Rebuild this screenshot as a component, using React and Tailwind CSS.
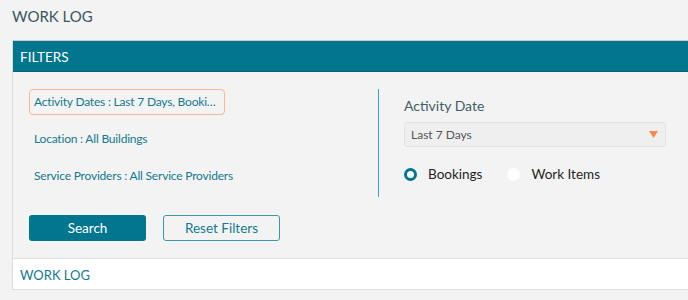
import { useState } from "react";

const App = () => {
    const [dateType, setDateType] = useState("bookings");

    const filters = [
        { id: "dates", label: "Activity Dates : Last 7 Days, Booki…", active: true },
        { id: "location", label: "Location : All Buildings" },
        { id: "providers", label: "Service Providers : All Service Providers" },
    ];

    return (
        <div className="h-[300px] overflow-hidden bg-[#f3f3f3] pl-3 font-['Lato',sans-serif]">
            <h1 className="pt-[6px] h-[40px] text-[15px] leading-[20px] text-[#3a5661]">WORK LOG</h1>

            <div className="border-l border-[#dcdcdc]">
                {/* Filters header */}
                <div className="h-[32px] border-t border-[#c4ccce] border-b border-b-[#0a5f70] bg-[#02768e] pl-[7px] pt-[3px] flex items-center">
                    <span className="text-white text-[13.5px] leading-none">FILTERS</span>
                </div>

                {/* Filter body */}
                <div className="pt-[17px] pl-4 pb-[17px] pr-[22px]">
                    <div className="flex h-[108px]">
                        <div className="w-[349px] flex flex-col items-start">
                            {filters.map((f, i) => (
                                <button
                                    key={f.id}
                                    type="button"
                                    className={`h-[26px] px-[4px] flex items-center justify-start whitespace-nowrap text-left rounded-[4px] border text-[12px] tracking-[-0.2px] text-[#127a8e] ${f.active ? "border-[#f5b996] w-[196px]" : "border-transparent"} ${i > 0 ? "mt-[11px]" : ""}`}
                                >
                                    {f.label}
                                </button>
                            ))}
                        </div>
                        <div className="w-px bg-[#3aa3b6]" />
                        <div className="flex-1 pl-[25px] pt-[7px]">
                            <div className="text-[14px] leading-[20px] text-[#3f5e67]">Activity Date</div>
                            <div className="mt-[6px] h-[25px] flex items-center justify-between rounded-[3px] border border-[#e3e3e3] bg-[#efefef] pl-[6px] pr-[7px]">
                                <span className="text-[12px] text-[#555]">Last 7 Days</span>
                                <svg width="9" height="7" viewBox="0 0 9 7">
                                    <path d="M0 0 H9 L4.5 7 Z" fill="#f58a4b" />
                                </svg>
                            </div>
                            <div className="mt-[17px] flex items-center h-[20px]">
                                {[
                                    { id: "bookings", label: "Bookings" },
                                    { id: "work", label: "Work Items" },
                                ].map((r, i) => (
                                    <label
                                        key={r.id}
                                        onClick={() => setDateType(r.id)}
                                        className={`flex items-center gap-[11px] cursor-pointer ${i > 0 ? "ml-[25px]" : ""}`}
                                    >
                                        <span
                                            className={`w-[13px] h-[13px] rounded-full bg-white ${dateType === r.id ? "border-[3.5px] border-[#02768e]" : ""}`}
                                        />
                                        <span className="text-[13.5px] text-[#1f1f1f]">{r.label}</span>
                                    </label>
                                ))}
                            </div>
                        </div>
                    </div>

                    <div className="mt-[18px] flex gap-[17px]">
                        <button type="button" className="w-[117px] h-[26px] rounded-[3px] bg-[#02768e] text-white text-[13.5px]">
                            Search
                        </button>
                        <button type="button" className="w-[117px] h-[26px] rounded-[3px] border border-[#3a96a8] text-[#127a8e] text-[13.5px]">
                            Reset Filters
                        </button>
                    </div>
                </div>

                {/* Results */}
                <div className="h-[32px] bg-white border-t border-b border-[#e0e0e0] pl-[7px] pt-[4px] flex items-center">
                    <span className="text-[13px] text-[#127a8e]">WORK LOG</span>
                </div>
            </div>
        </div>
    );
};

export default App;
